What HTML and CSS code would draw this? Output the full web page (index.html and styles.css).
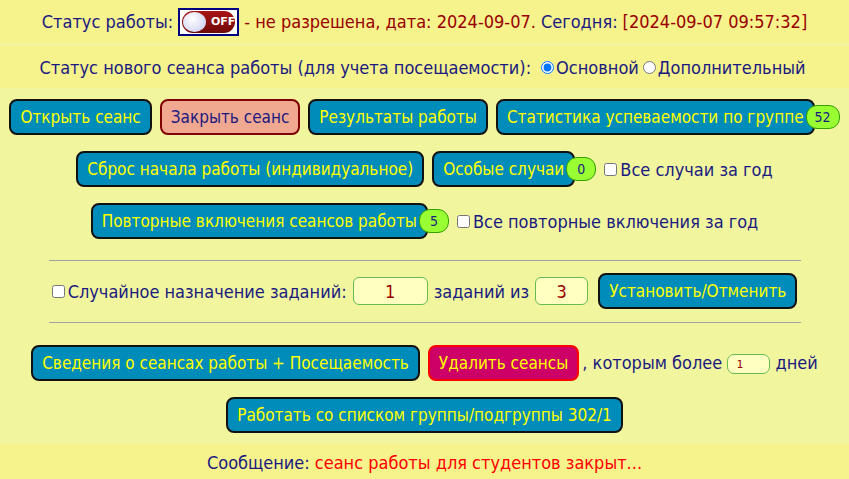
FILE: index.html
```html
<!doctype html>
<html lang="ru">
<head>
    <meta charset="UTF-8">
    <title>Сеансы работы</title>
    <link rel="stylesheet" href="styles.css">
</head>
<body>
<div class="bar status">
    <span class="navy">Статус работы:</span>
    <span class="toggle"><span class="pill"><span class="knob"></span><b>OFF</b></span></span>
    <span class="red">- не разрешена, дата: 2024-09-07.</span>
    <span class="navy">Сегодня:</span>
    <span class="red">[2024-09-07 09:57:32]</span>
</div>
<div class="bar mode">
    <span>Статус нового сеанса работы (для учета посещаемости):</span>
    <label class="opt"><input type="radio" name="mode" checked>Основной</label>
    <label class="opt"><input type="radio" name="mode">Дополнительный</label>
</div>

<div class="main">
    <div class="row">
        <button class="btn">Открыть сеанс</button>
        <button class="btn close">Закрыть сеанс</button>
        <button class="btn">Результаты работы</button>
        <span class="wrap">
            <button class="btn">Статистика успеваемости по группе</button><span class="badge">52</span>
        </span>
    </div>
    <div class="row">
        <button class="btn">Сброс начала работы (индивидуальное)</button>
        <span class="wrap">
            <button class="btn">Особые случаи</button><span class="badge">0</span>
        </span>
        <label class="check"><input type="checkbox">Все случаи за год</label>
    </div>
    <div class="row">
        <span class="wrap">
            <button class="btn">Повторные включения сеансов работы</button><span class="badge">5</span>
        </span>
        <label class="check"><input type="checkbox">Все повторные включения за год</label>
    </div>

    <hr>
    <div class="row tasks">
        <label class="check"><input type="checkbox">Случайное назначение заданий:</label>
        <input class="num" type="text" value="1">
        <span>заданий из</span>
        <input class="num short" type="text" value="3">
        <button class="btn">Установить/Отменить</button>
    </div>
    <hr class="second">

    <div class="row">
        <button class="btn">Сведения о сеансах работы + Посещаемость</button>
        <button class="btn del">Удалить сеансы</button>
        <span class="days">, которым более <input class="small" type="text" value="1"> дней</span>
    </div>
    <div class="row last">
        <button class="btn">Работать со списком группы/подгруппы 302/1</button>
    </div>
</div>

<div class="bar msg">
    <span class="navy">Сообщение:</span> <span class="alert">сеанс работы для студентов закрыт...</span>
</div>
</body>
</html>
```

FILE: styles.css
```css
body {
    margin: 0;
    background-color: #f1f69e;
    color: #1a1a80;
    font-family: "DejaVu Sans Condensed", "DejaVu Sans", sans-serif;
}

.bar {
    display: flex;
    justify-content: center;
    align-items: center;
    background-color: #f6f28c;
}

.status {
    height: 43px;
    gap: 5px;
    font-size: 18px;
    border-bottom: 3px solid #f1f69e;
}

.navy {
    color: #1a1a80;
}

.red {
    color: #990000;
}

.toggle {
    display: inline-flex;
    padding: 1px 2px;
    border: 2px solid #000080;
    background-color: #fff;
}

.pill {
    display: flex;
    align-items: center;
    width: 53px;
    height: 22px;
    border-radius: 12px;
    background: linear-gradient(to bottom, #a81515, #700808);
}

.knob {
    width: 23px;
    height: 20px;
    margin-left: 1px;
    border-radius: 50%;
    background: radial-gradient(circle at 40% 35%, #ffffff, #c4c8ee);
}

.pill b {
    margin-left: 5px;
    color: #fff;
    font-size: 11px;
    font-family: "DejaVu Sans", sans-serif;
}

.mode {
    height: 42px;
    font-size: 18px;
}

.mode > span {
    margin-right: 10px;
}

.opt {
    display: inline-flex;
    align-items: center;
    margin-right: 4px;
}

.opt input {
    margin: 0 2px 0 0;
    width: 13px;
    height: 13px;
}

.main {
    padding-top: 11px;
    padding-bottom: 11px;
}

.row {
    display: flex;
    justify-content: center;
    align-items: center;
    gap: 8px;
    margin-bottom: 16px;
}

.row.last {
    margin-bottom: 0;
}

.btn {
    height: 36px;
    padding: 0 9px;
    border: 2px solid #111;
    border-radius: 8px;
    background-color: #008cba;
    color: #ffff00;
    font-size: 17px;
    font-family: inherit;
}

.close {
    background-color: #f0a890;
    border-color: #800000;
    color: #1a1a80;
}

.del {
    background-color: #cc0066;
    border-color: #ff0000;
}

.wrap {
    display: inline-flex;
    align-items: center;
}

.badge {
    position: relative;
    margin-left: -9px;
    min-width: 12px;
    height: 22px;
    padding: 0 8px;
    border: 1px solid #33a000;
    border-radius: 11px;
    background-color: #99ff33;
    color: #1a1a80;
    font-size: 14px;
    line-height: 22px;
    text-align: center;
}

.check {
    display: inline-flex;
    align-items: center;
    font-size: 18px;
}

.check input {
    margin: 0 3px 0 0;
    width: 13px;
    height: 13px;
}

hr {
    width: 752px;
    margin: 21px auto 12px;
    border: 0;
    border-top: 1px solid #a0a0a8;
}

hr.second {
    margin: 13px auto 22px;
}

.tasks {
    gap: 6px;
    font-size: 18px;
    margin-bottom: 0;
}

.num {
    box-sizing: border-box;
    width: 75px;
    height: 28px;
    padding: 0 10px;
    border: 1px solid #66bb55;
    border-radius: 6px;
    background-color: #ffffc0;
    color: #990000;
    font-size: 18px;
    font-family: inherit;
    text-align: center;
}

.num.short {
    width: 53px;
}

.tasks .btn {
    margin-left: 4px;
}

.days {
    margin-left: -5px;
    font-size: 18px;
}

.small {
    box-sizing: border-box;
    width: 43px;
    height: 20px;
    padding: 0 8px;
    border: 1px solid #66bb55;
    border-radius: 7px;
    background-color: #ffffc0;
    color: #990000;
    font-size: 11px;
    font-family: "DejaVu Sans Mono", monospace;
    vertical-align: middle;
}

.msg {
    height: 36px;
    font-size: 18px;
    gap: 5px;
}

.alert {
    color: #ff0000;
}
```
